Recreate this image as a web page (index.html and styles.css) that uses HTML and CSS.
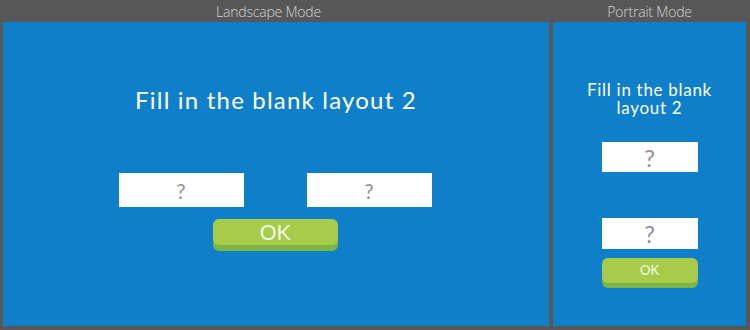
FILE: index.html
```html
<!DOCTYPE html>
<html lang="en">
<head>
    <meta charset="UTF-8">
    <meta name="viewport" content="width=device-width, initial-scale=1.0">
    <title>Fill in the blank layout 2</title>
    <link rel="stylesheet" href="styles.css">
</head>
<body>
    <div class="preview">
        <!-- Landscape -->
        <div class="mode mode-landscape">
            <div class="mode-label">Landscape Mode</div>
            <div class="screen landscape">
                <h1 class="title">Fill in the blank layout 2</h1>
                <div class="blanks">
                    <input class="blank" type="text" placeholder="?">
                    <input class="blank" type="text" placeholder="?">
                </div>
                <button class="ok-btn">OK</button>
            </div>
        </div>

        <!-- Portrait -->
        <div class="mode mode-portrait">
            <div class="mode-label">Portrait Mode</div>
            <div class="screen portrait">
                <h1 class="title">Fill in the blank layout 2</h1>
                <input class="blank blank-first" type="text" placeholder="?">
                <input class="blank blank-second" type="text" placeholder="?">
                <button class="ok-btn">OK</button>
            </div>
        </div>
    </div>
</body>
</html>
```

FILE: styles.css
```css
/* general */
body {
    margin: 0;
    background-color: #575757;
    font-family: Lato, "Open Sans", sans-serif;
}
.preview {
    display: flex;
    gap: 4px;
    padding: 0 4px 0 3px;
    height: 330px;
}
.mode {
    display: flex;
    flex-direction: column;
}
.mode-landscape {
    width: 546px;
}
.mode-portrait {
    width: 193px;
}
/* label above each screen */
.mode-label {
    height: 22px;
    line-height: 24px;
    text-align: center;
    font-family: "Open Sans", sans-serif;
    font-weight: 300;
    font-size: 14px;
    color: #d6d6d6;
    letter-spacing: -0.2px;
}
.mode-landscape .mode-label {
    padding-right: 15px;
}
.screen {
    height: 304px;
    background-color: #107fc9;
    display: flex;
    flex-direction: column;
    align-items: center;
}
.title {
    margin: 0;
    color: #fff;
    font-weight: 400;
    text-align: center;
}
/* the blanks */
.blank {
    box-sizing: border-box;
    border: none;
    outline: none;
    background: #fff;
    text-align: center;
    font-family: inherit;
    font-weight: 400;
    font-size: 21px;
    color: #929292;
    padding: 0;
}
.blank::placeholder {
    color: #929292;
}
/* green button with a darker edge */
.ok-btn {
    border: none;
    border-radius: 6px;
    background-color: #a6cc4a;
    box-shadow: 0 6px 0 #7cb545;
    color: #f4f8ea;
    font-family: inherit;
    padding: 0;
}

/* landscape sizes */
.landscape {
    padding-top: 63px;
    box-sizing: border-box;
}
.landscape .title {
    font-size: 24px;
    line-height: 30px;
    letter-spacing: 1.2px;
}
.landscape .blanks {
    display: flex;
    gap: 63px;
    margin-top: 58px;
    margin-right: 2px;
}
.landscape .blank {
    width: 125px;
    height: 34px;
}
.landscape .ok-btn {
    width: 125px;
    height: 26px;
    margin-top: 12px;
    margin-right: 2px;
    font-size: 21px;
    line-height: 26px;
}

/* portrait sizes */
.portrait {
    padding: 59px 20px 0;
    box-sizing: border-box;
}
.portrait .title {
    font-size: 17px;
    line-height: 18px;
    letter-spacing: 0.7px;
}
.portrait .blank {
    width: 96px;
    height: 30px;
    font-size: 24px;
}
.portrait .blank-first {
    margin-top: 25px;
}
.portrait .blank-second {
    margin-top: 46px;
    height: 31px;
}
.portrait .ok-btn {
    width: 96px;
    height: 25px;
    margin-top: 9px;
    font-size: 13px;
    line-height: 25px;
    box-shadow: 0 5px 0 #7cb545;
}
```
